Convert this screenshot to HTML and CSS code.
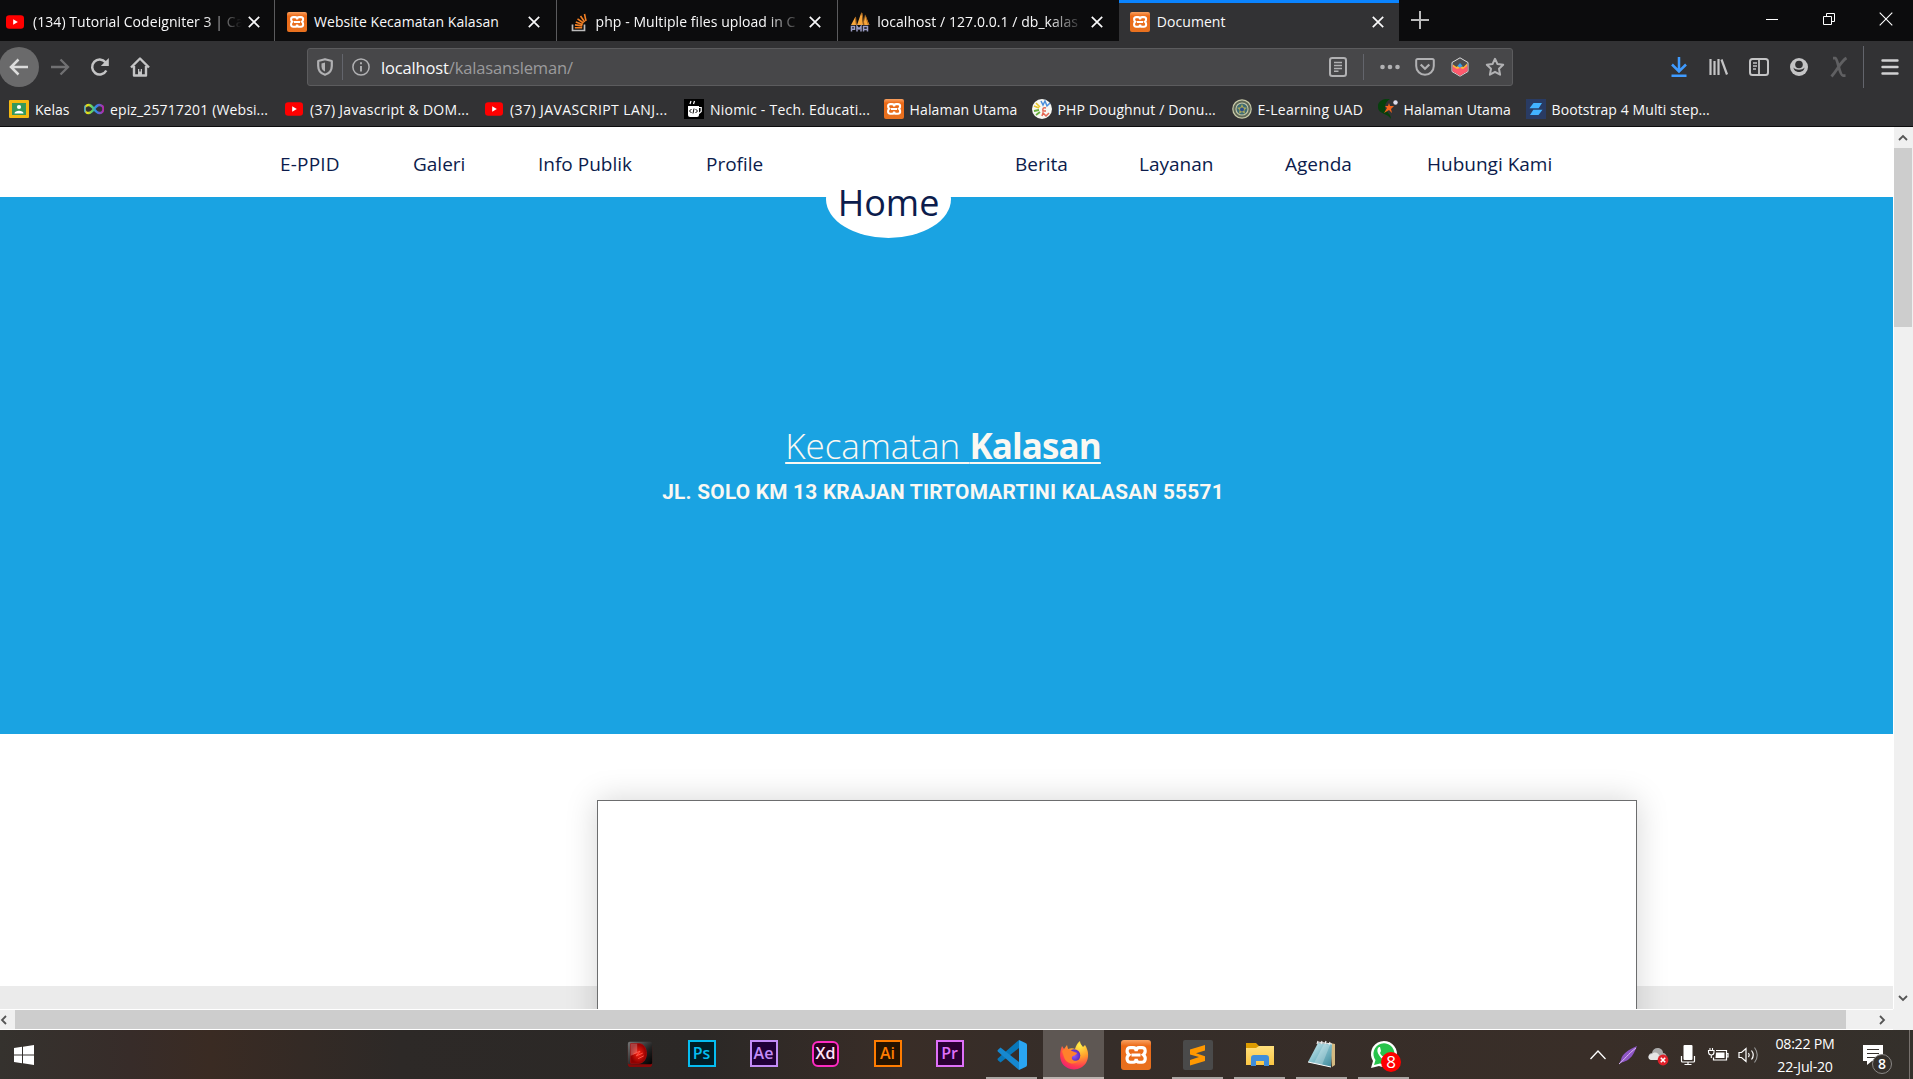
FILE: index.html
```html
<!DOCTYPE html>
<html lang="id">
<head>
<meta charset="utf-8">
<title>Document</title>
<link rel="stylesheet" href="styles.css">
</head>
<body>
<svg class="sprite" aria-hidden="true">
  <defs>
    <linearGradient id="orange" x2="0" y2="1"><stop stop-color="#f9a262"/><stop offset=".2" stop-color="#ec6a18"/><stop offset="1" stop-color="#e8711f"/></linearGradient>
    <linearGradient id="rainbow" gradientUnits="userSpaceOnUse" x1="0" y1="0" x2="20" y2="0"><stop stop-color="#2196f3"/><stop offset=".15" stop-color="#ffe000"/><stop offset=".4" stop-color="#5bd06b"/><stop offset=".6" stop-color="#2a8cf0"/><stop offset="1" stop-color="#c020a0"/></linearGradient>
    <radialGradient id="fire" cx=".7" cy=".15" r="1"><stop stop-color="#fff04a"/><stop offset=".4" stop-color="#ffa02c"/><stop offset=".75" stop-color="#ff3b4e"/><stop offset="1" stop-color="#e31587"/></radialGradient>
    <radialGradient id="globe"><stop stop-color="#9059ff"/><stop offset="1" stop-color="#5b2bb8"/></radialGradient>
    <linearGradient id="dark" x2="1" y2="1"><stop stop-color="#777"/><stop offset=".6" stop-color="#222"/><stop offset="1" stop-color="#000"/></linearGradient>
    <radialGradient id="red"><stop stop-color="#ff2010"/><stop offset="1" stop-color="#8d0000"/></radialGradient>
    <linearGradient id="glass" x2="1" y2="1"><stop stop-color="#d9f1f4"/><stop offset=".5" stop-color="#7fbcc9"/><stop offset="1" stop-color="#3d8799"/></linearGradient>
    <linearGradient id="folder" x2="0" y2="1"><stop stop-color="#ffe07d"/><stop offset="1" stop-color="#fbc644"/></linearGradient>
  </defs>
  <symbol id="youtube" viewBox="0 0 20 20"><rect x="1" y="3.3" width="18" height="13.4" rx="3.2" fill="#f00"/><path d="M8.2 7.2v5.6l4.6-2.8z" fill="#fff"/></symbol>
  <symbol id="xampp" viewBox="0 0 20 20"><rect width="20" height="20" rx="2" fill="url(#orange)"/><path d="M6.2 5.1h1.9c2 0 2 1.4 2 2.4 0-1 0-2.4 2-2.4H14c2.600 0 2.700 3.300.9 4.700 2 1.600 1.600 5-.9 5h-1.900c-1.800 0-2-1.300-2-2.300 0 1-.2 2.300-2 2.300H6.200c-2.500 0-2.900-3.400-.9-5-1.800-1.400-1.700-4.700.9-4.700zM7 10h6" fill="none" stroke="#fff" stroke-width="2.100"/></symbol>
  <symbol id="stack" viewBox="0 0 20 20"><path d="M3.500 12.500v6h12v-6" fill="none" stroke="#bcbbbb" stroke-width="1.700"/><path d="M5.800 15.700h7.400M6 12.900l7.300 1M6.800 10l7 2.500M8.500 6.800l6 4.200M11.500 4l4.200 6M15.500 2l1.500 7" fill="none" stroke="#f48024" stroke-width="1.600"/></symbol>
  <symbol id="pma" viewBox="0 0 20 20"><path d="M1 13L5.500 4.500 6 13zM7 13L11.500 0l1.500 13zM13.500 13L15 2.500l4.500 10.500z" fill="#f8a63a"/><path d="M5.500 5l1 8M12 1l2 12M15.500 4l3 9" stroke="#a9641c" fill="none"/><path d="M1.500 19.500v-5h3v2.700h-3M7 19.500v-5l2 2.500 2-2.500v5M13.500 19.500v-5h4v5M13.500 17.500h4" stroke="#9a9cc4" stroke-width="1.500" fill="none"/></symbol>
  <symbol id="close" viewBox="0 0 12 12"><path d="M.8.800l10.400 10.400M11.200.800L.8 11.200" fill="none" stroke="currentColor" stroke-width="1.700"/></symbol>
  <symbol id="kelas" viewBox="0 0 20 20"><rect y="1" width="20" height="18" rx="1" fill="#f4b811"/><rect x="3" y="4" width="14" height="12" fill="#35985b"/><circle cx="10" cy="8" r="2.100" fill="#fff"/><path d="M5.500 14.500c0-3.800 9-3.800 9 0z" fill="#fff"/></symbol>
  <symbol id="infinity" viewBox="0 0 20 20"><path d="M10 10C7.600 6.800 6.300 6 4.600 6a3.900 3.900 0 000 8c1.700 0 3-.800 5.400-4s3.700-4 5.400-4a3.900 3.900 0 010 8c-1.700 0-3-.800-5.400-4z" fill="none" stroke="url(#rainbow)" stroke-width="2.300"/></symbol>
  <symbol id="niomic" viewBox="0 0 20 20"><path fill="#000" d="M0 0h20v20H0z"/><path d="M4 7h11v9q0 2-2 2H6q-2 0-2-2z" fill="#fff"/><path d="M6 5l1-3M9.500 5l1-3M15 8.500h2.200v4l-2.200 2" fill="none" stroke="#fff" stroke-width="1.200"/><path d="M7.500 10L5.500 12l2 2M11.500 10l2 2-2 2M10 9.500l-1 5" stroke="#000" fill="none"/></symbol>
  <symbol id="chartphp" viewBox="0 0 20 20"><circle cx="10" cy="10" r="10" fill="#f7f7f2"/><path d="M2 7l5 2M4 4l4 4" stroke="#e8c52b" stroke-width="1.600"/><path d="M9 2l2 4 2-4 2 5 3-3" stroke="#4b8edb" fill="none" stroke-width="1.500"/><path d="M2 12l5-1M4 16l4-3" stroke="#66ad3b" stroke-width="1.800"/><path d="M10 17l1-3 3 3 3-3M14 9q-4-1-3 3l3 0" stroke="#e46652" fill="none" stroke-width="1.500"/></symbol>
  <symbol id="uad" viewBox="0 0 20 20"><circle cx="10" cy="10" r="9.800" fill="#c8caa9"/><circle cx="10" cy="10" r="7.600" fill="none" stroke="#5d6756" stroke-width="2"/><circle cx="10" cy="10" r="5.500" fill="#3e6b74"/><path d="M10 5l1.500 3.300 3.500.4-2.600 2.400.7 3.600L10 13l-3.100 1.700.7-3.600L5 8.700l3.500-.4z" fill="#a8a75b"/><circle cx="10" cy="10.500" r="2" fill="#2b4d8e"/></symbol>
  <symbol id="leaf" viewBox="0 0 20 20"><path d="M12 0C3-1-1 4 0 9c1 6 9 5 13 11 0-6-5-6-6-11-.4-4 2-7 5-9z" fill="#06400c"/><path d="M11 4l1 3 4 0-3 3 1 4-3-3-5 3 3-5-2-2 3 0z" fill="#f5651c"/><circle cx="17.500" cy="3.500" r="2.200" fill="#dde"/></symbol>
  <symbol id="boot" viewBox="0 0 20 20"><path fill="#293b63" d="M0 0h20v20H0z"/><path d="M7.500 4H16l-3.300 5.300H3.500zM7.300 10.700h9.200L12.500 16H4z" fill="#42b2ff"/></symbol>
</svg>

<div class="screen">
  <header class="browser">
    <div class="tabs">
      <div class="tab first"><svg class="fav"><use href="#youtube"/></svg><span class="label faded">(134) Tutorial Codeigniter 3 | Ca</span><svg class="x"><use href="#close"/></svg></div>
      <div class="tab"><svg class="fav"><use href="#xampp"/></svg><span class="label">Website Kecamatan Kalasan</span><svg class="x"><use href="#close"/></svg></div>
      <div class="tab"><svg class="fav"><use href="#stack"/></svg><span class="label faded">php - Multiple files upload in C</span><svg class="x"><use href="#close"/></svg></div>
      <div class="tab"><svg class="fav"><use href="#pma"/></svg><span class="label faded">localhost / 127.0.0.1 / db_kalas</span><svg class="x"><use href="#close"/></svg></div>
      <div class="tab active"><svg class="fav"><use href="#xampp"/></svg><span class="label">Document</span><svg class="x"><use href="#close"/></svg></div>
      <svg class="plus" viewBox="0 0 18 18"><path d="M9 0v18M0 9h18" stroke="#bbb" stroke-width="2"/></svg>
      <div class="window-controls">
        <svg viewBox="0 0 14 14"><path d="M1 7.500h12" stroke="#fff"/></svg>
        <svg viewBox="0 0 14 14"><path d="M1.500 4.500h8v8h-8zM4.500 4.500v-3h8v8h-3" fill="none" stroke="#fff"/></svg>
        <svg viewBox="0 0 14 14"><path d="M.7.700l12.600 12.600M13.300.700L.7 13.300" stroke="#fff" stroke-width="1.100"/></svg>
      </div>
    </div>

    <div class="toolbar">
      <div class="back"><svg class="ic" viewBox="0 0 20 20"><path d="M19 10H2M9.500 2.500L2 10l7.500 7.500" fill="none" stroke="#dcdcdc" stroke-width="2.500"/></svg></div>
      <div class="nav-buttons">
        <svg class="ic" viewBox="0 0 20 20"><path d="M1 10h17M10.500 2.500L18 10l-7.500 7.500" fill="none" stroke="#707072" stroke-width="2.300"/></svg>
        <svg class="ic" viewBox="0 0 20 20"><path d="M16.300 13.500A7.500 7.500 0 1115.500 5.300" fill="none" stroke="#c4c4c5" stroke-width="2.500"/><path d="M18.800 1v8h-8z" fill="#c4c4c5"/></svg>
        <svg class="ic" viewBox="0 0 20 20"><path d="M1 10.500L10 1.500l9 9M4 9v9.500h12V9" fill="none" stroke="#c4c4c5" stroke-width="2.400" stroke-linejoin="round"/><path d="M8 18v-6h4v6z" fill="#c4c4c5"/><path d="M10 12v2.500" stroke="#323234" stroke-width="1.500"/></svg>
      </div>
      <div class="urlbar">
        <svg class="shield" viewBox="0 0 16 18"><path d="M8 1.200L1.200 3v5c0 4.500 3 7.700 6.800 8.800 3.800-1.100 6.800-4.300 6.800-8.800V3z" fill="none" stroke="#b1b1b3" stroke-width="2.200" stroke-linejoin="round"/><path d="M8 4.500L4.500 5.400v3c0 2.500 1.500 4.300 3.500 5z" fill="#b1b1b3"/></svg>
        <i class="rule"></i>
        <svg class="info" viewBox="0 0 18 18"><circle cx="9" cy="9" r="8.100" fill="none" stroke="#b1b1b3" stroke-width="1.500"/><path d="M9 8v5.500M9 4.300v2" stroke="#b1b1b3" stroke-width="1.900"/></svg>
        <span class="url">localhost<span class="path">/kalasansleman/</span></span>
        <div class="url-tools">
          <svg class="ic" viewBox="0 0 20 20"><rect x="2" y="1" width="16" height="18" rx="2.300" fill="none" stroke="#b1b1b3" stroke-width="2"/><path d="M6 5.500h8M6 8.500h8M6 11.500h8M6 14.300h4.500" stroke="#b1b1b3" stroke-width="1.400"/></svg>
          <i class="rule"></i>
          <svg class="ic dots" viewBox="0 0 20 20"><g fill="#b1b1b3"><circle cx="2.500" cy="10" r="2.300"/><circle cx="10" cy="10" r="2.300"/><circle cx="17.500" cy="10" r="2.300"/></g></svg>
          <svg class="ic" viewBox="0 0 20 20"><path d="M2.700 2h14.600q1.500 0 1.500 1.500V9a8.800 8.800 0 01-17.600 0V3.500Q1.200 2 2.700 2z" fill="none" stroke="#b1b1b3" stroke-width="2"/><path d="M5.700 7.500L10 11.700l4.300-4.200" fill="none" stroke="#b1b1b3" stroke-width="2.300"/></svg>
          <svg class="ic" viewBox="0 0 20 20"><path d="M10 .8l8 4.700v9L10 19.200l-8-4.700v-9z" fill="#4d4d4f" stroke="#ddd"/><path d="M2.500 8l4 3L10 9l3 2 4.500-3v6.300L10 18.700l-7.500-4.400z" fill="#ff596d"/><path d="M3 7.500l3.500 2.500 1.500-1 2 2 2-1.500 1.500.5L17 6.500V9l-4 3-3-1-3 1-4-2.500z" fill="#ffb737"/><path d="M7.500 9l2.500-3 2.500 3-2.500 1.800z" fill="#36a2eb"/></svg>
          <svg class="ic" viewBox="0 0 20 20"><path d="M10 1.800l2.500 5.300 5.700.7-4.200 4 1.100 5.900L10 14.800l-5.100 2.900L6 11.800l-4.200-4 5.700-.7z" fill="none" stroke="#b1b1b3" stroke-width="2" stroke-linejoin="round"/></svg>
        </div>
      </div>
      <div class="actions">
        <svg class="ic" viewBox="0 0 20 20"><path d="M10 0v14M3 7.500l7 7 7-7M2.500 18.700h15" fill="none" stroke="#3f9bff" stroke-width="2.500"/></svg>
        <svg class="ic" viewBox="0 0 20 20"><path d="M1.500 2v16M5.500 4v14M9.500 2v16M12.500 2.500L18 17.500" fill="none" stroke="#c4c4c5" stroke-width="2.200"/></svg>
        <svg class="ic" viewBox="0 0 20 20"><rect x="1" y="2" width="18" height="16" rx="2.500" fill="none" stroke="#c4c4c5" stroke-width="2"/><path d="M10 2v16" stroke="#c4c4c5" stroke-width="1.800"/><path d="M4 6h4M4 9h4M4 12h3" stroke="#c4c4c5" stroke-width="1.300"/></svg>
        <svg class="ic" viewBox="0 0 20 20"><circle cx="10" cy="10" r="9" fill="#c4c4c5"/><circle cx="10" cy="7.500" r="3.800" fill="#323234"/><path d="M4.500 10.500c.5 6 10.500 6 11 0-2 3-9 3-11 0z" fill="#323234"/></svg>
        <svg class="ic" viewBox="0 0 20 20"><path d="M4 1.200h2.500c2 0 4 17.500 7.500 17.500h2.500M17.500 1C12 4 9 12 2.500 19.500" fill="none" stroke="#606062" stroke-width="2.800"/></svg>
        <i class="rule tall"></i>
        <svg class="ic" viewBox="0 0 20 20"><path d="M2.500 3.500h15M2.500 10h15M2.500 16.500h15" stroke="#d0d0d1" stroke-width="2.400" stroke-linecap="round"/></svg>
      </div>
    </div>

    <nav class="bookmarks">
      <a class="b1"><svg><use href="#kelas"/></svg>Kelas</a>
      <a class="b2"><svg><use href="#infinity"/></svg>epiz_25717201 (Websi...</a>
      <a class="b3"><svg><use href="#youtube"/></svg>(37) Javascript &amp; DOM...</a>
      <a class="b4"><svg><use href="#youtube"/></svg>(37) JAVASCRIPT LANJ...</a>
      <a class="b5"><svg><use href="#niomic"/></svg>Niomic - Tech. Educati...</a>
      <a class="b6"><svg><use href="#xampp"/></svg>Halaman Utama</a>
      <a class="b7"><svg><use href="#chartphp"/></svg>PHP Doughnut / Donu...</a>
      <a class="b8"><svg><use href="#uad"/></svg>E-Learning UAD</a>
      <a class="b9"><svg><use href="#leaf"/></svg>Halaman Utama</a>
      <a class="b10"><svg><use href="#boot"/></svg>Bootstrap 4 Multi step...</a>
    </nav>
  </header>

  <div class="viewport">
    <main class="page">
      <nav class="menu">
        <a class="m1">E-PPID</a><a class="m2">Galeri</a><a class="m3">Info Publik</a><a class="m4">Profile</a>
        <a class="home">Home</a>
        <a class="m5">Berita</a><a class="m6">Layanan</a><a class="m7">Agenda</a><a class="m8">Hubungi Kami</a>
      </nav>
      <section class="hero">
        <h1>Kecamatan <b>Kalasan</b></h1>
        <p>JL. SOLO KM 13 KRAJAN TIRTOMARTINI KALASAN 55571</p>
      </section>
      <section class="content">
        <div class="card"></div>
        <div class="strip"></div>
      </section>
    </main>
    <div class="vscroll">
      <svg viewBox="0 0 10 6"><path d="M1 5l4-4 4 4" fill="none" stroke="#555" stroke-width="1.800"/></svg>
      <div class="vthumb"></div>
      <svg class="down" viewBox="0 0 10 6"><path d="M1 1l4 4 4-4" fill="none" stroke="#555" stroke-width="1.800"/></svg>
    </div>
    <div class="hscroll">
      <svg viewBox="0 0 6 10"><path d="M5 1L1 5l4 4" fill="none" stroke="#555" stroke-width="1.800"/></svg>
      <div class="hthumb"></div>
      <svg class="right" viewBox="0 0 6 10"><path d="M1 1l4 4-4 4" fill="none" stroke="#555" stroke-width="1.800"/></svg>
    </div>
  </div>

  <footer class="taskbar">
    <svg class="start" viewBox="0 0 20 20"><path d="M0 3l8-1.200v7.700H0zM9 1.700L20 0v9.500H9zM0 10.500h8v7.700L0 17zM9 10.500h11V20L9 18.300z" fill="#fff"/></svg>
    <div class="apps">
      <div class="app"><svg viewBox="0 0 30 30"><rect x="2" y="4" width="26" height="25" rx="3" fill="#870909"/><rect x="2" y="2" width="26" height="24" rx="2" fill="url(#dark)"/><path d="M5 4h9c10 0 11 20 0 21H5z" fill="url(#red)" stroke="#a50a0a"/><path d="M5 4h7v10l-7 3z" fill="#fff" opacity=".25"/><path d="M8 15l7-3-4 5 7-3M13 20l6-3" stroke="#ff574a" fill="none"/></svg></div>
      <div class="app"><span class="adobe ps">Ps</span></div>
      <div class="app"><span class="adobe ae">Ae</span></div>
      <div class="app"><span class="adobe xd">Xd</span></div>
      <div class="app"><span class="adobe ai">Ai</span></div>
      <div class="app"><span class="adobe pr">Pr</span></div>
      <div class="app run"><svg viewBox="0 0 30 30"><path d="M22 8L3.500 22.500 1 20.300Q0 19.300 1 18.300L22 0z" fill="#0877b9"/><path d="M22 22L3.500 7.500 1 9.700q-1 1 0 2L22 30z" fill="#1688d0"/><path d="M22 0l6.500 3Q30 3.700 30 5v20q0 1.300-1.500 2L22 30z" fill="#2aa5f2"/></svg></div>
      <div class="app current"><svg viewBox="0 0 30 30"><path d="M3 6l2 3 3-4 1 4c3-1 5-1 7 0 1-3 2-6 5-8 0 3 2 4 3 6l2-2c4 6 4 13 1 18-6 9-19 8-24 0C0 17 1 11 3 6z" fill="url(#fire)"/><circle cx="15" cy="15.500" r="6.300" fill="url(#globe)"/><path d="M3 11c3-3 7-3 10 0l5 2c-1 3-4 2-5 4-1 3 3 5 7 3-4 6-13 4-15-3z" fill="#ff812c"/></svg></div>
      <div class="app"><svg viewBox="0 0 20 20"><use href="#xampp"/></svg></div>
      <div class="app run"><svg viewBox="0 0 30 30"><rect width="30" height="30" rx="2" fill="#4a4a4a"/><path d="M7 9.500L22 5v5.500l-9 2.700 9 3V21L7 25.500V20l9-2.900-9-2.700z" fill="#ff9800"/></svg></div>
      <div class="app run"><svg viewBox="0 0 30 30"><path d="M1 3h10l3 3h14v5H1z" fill="#dc9b00"/><path d="M1 8h10l3-2h15v19H1z" fill="url(#folder)"/><path d="M6 26V18q0-3 3-3h12q3 0 3 3v8h-5v-5h-8v5z" fill="#3f8edb"/></svg></div>
      <div class="app run"><svg viewBox="0 0 30 30"><path d="M23 3l5 1v21l-3 2z" fill="#d4ba82"/><path d="M11 3l14 1-1 23-23-5z" fill="url(#glass)"/><path d="M11 2l14 2M10 4l1-3M14 4l1-3M18 4l1-3M22 5l1-3" stroke="#eee" stroke-width="1.200"/><path d="M1 22l23 5" stroke="#fff"/><path d="M17 4l6 1-8 20-8-2z" fill="#fff" opacity=".25"/></svg></div>
      <div class="app run"><svg viewBox="0 0 30 30"><path d="M2 28l2-7A13 13 0 1110 26z" fill="#fff"/><path d="M5 25l1.500-5A10.500 10.500 0 1111 23.500z" fill="#27c34b"/><path d="M10 7c-4 3 0 10 5 13 5 2 6 0 6-3l-4-2-2 2c-2-1-3-2-4-4l1-2-1-4z" fill="#fff"/><circle cx="22" cy="22" r="10" fill="#f00"/></svg><span class="count">8</span></div>
    </div>
    <div class="tray">
      <svg viewBox="0 0 20 20"><path d="M2.500 14l7.500-8 7.500 8" fill="none" stroke="#fff" stroke-width="1.300"/></svg>
      <svg viewBox="0 0 20 20"><path d="M1 19c2-2 7-2 10-5 4-3 6-8 8-13C10 5 4 9 3 15z" fill="#8e56c5"/><path d="M1 19C6 15 10 9 18 3" stroke="#ddbdf4" fill="none"/></svg>
      <svg viewBox="0 0 20 20"><path d="M4 15C-1 14 0 8 4 8c1-7 11-6 11 0 4 0 5 6 1 7z" fill="#aaa"/><path d="M3 15c-4-1-3-6 1-6 3-3 7-1 8 3v3z" fill="#e5e5e5"/><circle cx="15" cy="15" r="5.400" fill="#e0202a"/><path d="M12.800 12.800l4.400 4.400M17.200 12.800l-4.400 4.400" stroke="#fff" stroke-width="1.600"/></svg>
      <svg viewBox="0 0 20 20"><rect x="5.500" width="9" height="15" rx="1" fill="#fff"/><path d="M3.500 11v5q0 1 1 1h11q1 0 1-1v-5M10 17v3M6.500 19.500h7" fill="none" stroke="#fff" stroke-width="1.200"/></svg>
      <svg viewBox="0 0 20 20"><path d="M8 5.500h10.500v9.500H5.500v-2.500M18.500 8.500h1.500v3.500h-1.500" fill="none" stroke="#fff" stroke-width="1.200"/><path d="M8 7.500h8.500V13H7.500z" fill="#fff"/><path d="M.5 5.500H6V7q0 3-2.700 3T.5 7zM2 3v2.500M4.500 3v2.500M3.300 10v3" fill="none" stroke="#fff" stroke-width="1.100"/></svg>
      <svg viewBox="0 0 20 20"><path d="M1 7.500h2.500L8 3.500v13l-4.500-4H1z" fill="none" stroke="#fff" stroke-width="1.200"/><path d="M10.500 8q1.500 2 0 4.200M13.500 5.500q3.500 4.500 0 9" fill="none" stroke="#fff" stroke-width="1.200"/><path d="M16.500 2.500q5.500 7.500 0 15" fill="none" stroke="#999" stroke-width="1.100"/></svg>
      <div class="clock"><span>08:22 PM</span><span>22-Jul-20</span></div>
      <div class="notice"><svg viewBox="0 0 22 20"><path d="M0 0h20v16H9l-5 4v-4H0z" fill="#fff"/><path d="M4 4.500h12M4 8.500h12M4 12.500h8" stroke="#35302c" stroke-width="1.200"/></svg><span class="badge">8</span></div>
    </div>
  </footer>
</div>
</body>
</html>
```

FILE: styles.css
```css
* { box-sizing: border-box; }
body { margin: 0; font-family: "Open Sans", "Noto Sans", sans-serif; overflow: hidden; }
svg { display: block; flex: none; overflow: visible; }
a, span { white-space: nowrap; }
.sprite { position: absolute; width: 0; height: 0; }
.screen { width: 1913px; height: 1079px; display: flex; flex-direction: column; overflow: hidden; }

.browser { height: 127px; flex: none; background: #323234; border-bottom: 1px solid #0c0c0d; color: #f9f9fa; }
.tabs { height: 41px; display: flex; background: #0c0c0d; }
.tab { width: 281.600px; height: 41px; flex: none; display: flex; align-items: center; padding: 2px 16px 0 12px; border-left: 1px solid #5b5b5d; font-size: 14px; }
.tab.first { width: 274px; padding: 2px 14px 0 5px; border-left: 0; }
.tab.active { background: #323234; border-left: 0; border-top: 3px solid #0a84ff; padding: 0 15px 1px 11px; width: 280px; }
.fav { width: 20px; height: 20px; }
.label { flex: 1; margin: 0 6px 0 7px; letter-spacing: .06px; min-width: 0; }
.first .label { margin-left: 8px; }
.faded { -webkit-mask-image: linear-gradient(to right, #000 82%, transparent 100%); mask-image: linear-gradient(to right, #000 82%, transparent 100%); }
.x { width: 12px; height: 12px; }
.plus { width: 18px; height: 18px; margin: 11px 0 0 12px; }
.window-controls { margin: 12px 20px 0 auto; display: flex; gap: 43px; }
.window-controls svg { width: 14px; height: 14px; }

.toolbar { height: 51px; display: flex; align-items: center; }
.ic { width: 20px; height: 20px; }
.back { width: 40px; height: 40px; margin-left: -1px; border-radius: 50%; background: #6a6a6b; display: grid; place-items: center; flex: none; }
.nav-buttons { display: flex; gap: 20px; margin-left: 11px; width: 257px; flex: none; }
.urlbar { width: 1206px; height: 38px; flex: none; background: #474749; border: 1px solid #5c5c5e; border-radius: 3px; display: flex; align-items: center; }
.shield { width: 16px; height: 18px; margin-left: 9px; }
.rule { width: 1px; height: 26px; background: #63656c; flex: none; }
.urlbar > .rule { margin: 0 9px; }
.info { width: 18px; height: 18px; }
.url { margin: 2px 0 0 11px; font-size: 16.500px; letter-spacing: -.15px; }
.path { color: #9b9b9d; }
.url-tools { margin: 0 7px 0 auto; display: flex; align-items: center; gap: 15px; }
.url-tools .dots { margin-left: 1px; }
.actions { margin: 0 13px 0 auto; display: flex; align-items: center; gap: 20px; }
.rule.tall { height: 42px; margin: 0 -4px 0 -6px; }

.bookmarks { height: 34px; display: flex; align-items: center; padding-left: 9px; font-size: 14px; }
.bookmarks a { display: flex; align-items: center; gap: 6px; flex: none; height: 30px; }
.bookmarks svg { width: 20px; height: 20px; }
.b1 { width: 75px; } .b2 { width: 200px; letter-spacing: .13px; } .b3 { width: 200px; letter-spacing: .28px; } .b4 { width: 200px; letter-spacing: .42px; }
.b5 { width: 199.500px; letter-spacing: .22px; } .b6 { width: 148px; letter-spacing: .15px; } .b7 { width: 200px; letter-spacing: .13px; } .b8 { width: 146px; letter-spacing: .25px; }
.b9 { width: 148px; letter-spacing: .1px; } .b10 { width: 190px; letter-spacing: .1px; }

.viewport { height: 903px; flex: none; display: grid; grid-template: 882px 21px / 1893px 20px; background: #f0f0f0; }
.page { overflow: hidden; background: #fff; }
.menu { height: 70px; display: flex; padding: 23px 0 0 280px; font-size: 19px; line-height: 28px; color: #0c1c4c; }
.menu a { flex: none; }
.m1 { width: 133px; letter-spacing: .2px; } .m2 { width: 125px; } .m3 { width: 168px; } .m4 { width: 120px; }
.m5 { width: 124px; } .m6 { width: 146px; } .m7 { width: 142px; }
.home { position: relative; width: 125px; height: 78px; margin: 10px 64px 0 0; padding-top: 26px; border-radius: 50%; background: #fff; font-size: 36px; line-height: 33px; text-align: center; }
.hero { height: 536.500px; padding-top: 224px; background: #1aa3e2; color: #faf8f2; text-align: center; }
.hero h1 { margin: 0 7px 0 0; font-size: 35px; line-height: 50px; font-weight: 300; text-decoration: underline; text-decoration-thickness: 2px; text-underline-offset: 3px; }
.hero b { font-weight: 700; letter-spacing: -.9px; }
.hero p { margin: 7px 7px 0 0; font: 700 20.800px/28px Roboto, sans-serif; letter-spacing: .25px; }
.content { height: 276px; display: grid; grid-template: 252.500px 23px / 597px 1040px 1fr; }
.card { grid-area: 1 / 2 / 3 / 3; margin-top: 66.500px; height: 400px; background: #fff; border: 1px solid #6c6d6e; box-shadow: 0 0 30px rgba(0,0,0,.17); z-index: 1; }
.strip { grid-area: 2 / 1 / 3 / 4; background: #ebebeb; }
.vscroll { border-left: 1px solid #fff; display: flex; flex-direction: column; align-items: center; padding: 8px 1px 8px 0; }
.vscroll svg { width: 10px; height: 6px; }
.vthumb { width: 18px; height: 179px; margin-top: 7px; background: #cdcdcd; }
.down { margin-top: auto; }
.hscroll { border-top: 1px solid #fff; border-bottom: 1px solid #fff; display: flex; align-items: center; padding: 0 8px 0 1px; }
.hscroll svg { width: 6px; height: 10px; }
.hthumb { width: 1831px; height: 19px; margin-left: 8px; background: #cdcdcd; }
.right { margin-left: auto; }

.taskbar { height: 49px; flex: none; display: flex; background: linear-gradient(90deg, #35322e 0, #372c29 130px, #3a2b23 210px, #2d2927 400px, #2b2826 700px, #392d27 900px, #352d29 1100px, #392e28 1600px, #34302b 1913px); color: #fff; }
.start { width: 20px; height: 20px; margin: 15px 0 0 14px; }
.apps { margin-left: 575px; display: flex; gap: 1px; flex: none; }
.app { width: 61px; height: 49px; padding-top: 10px; display: flex; justify-content: center; position: relative; }
.app svg { width: 30px; height: 30px; }
.app:first-child svg { width: 28px; height: 28px; }
.run { border-bottom: 2px solid #aaa6a3; width: 51px; margin: 0 5px; }
.current { background: #5e5753; border-bottom: 2px solid #bcb4b0; }
.adobe { width: 28px; height: 27px; border: 2px solid; font: 600 16px/22px "Open Sans", sans-serif; text-align: center; }
.ps { color: #05bdf1; background: #001d26; }
.ae { color: #c38cf7; background: #200038; }
.xd { width: 27px; height: 26px; border-color: #ff2bc2; color: #ffe1fa; background: #2c001e; border-radius: 6px; margin-top: 1px; line-height: 20px; }
.ai { color: #ff7c00; background: #261300; }
.pr { color: #df70f9; background: #2a0033; }
.count { position: absolute; left: 23px; top: 22px; width: 20px; line-height: 20px; font-size: 17px; text-align: center; }
.tray { margin-left: auto; display: flex; padding-top: 15px; border-right: 1px solid #77716d; margin-right: 3px; height: 49px; }
.tray > svg { width: 20px; height: 20px; margin-right: 10px; }
.clock { width: 64px; margin: -13px 0 0 5px; display: flex; flex-direction: column; font-size: 14.200px; line-height: 23px; text-align: center; letter-spacing: -.25px; }
.notice { width: 46px; margin-left: 26px; position: relative; }
.notice svg { width: 22px; height: 20px; }
.badge { position: absolute; left: 9px; top: 9px; width: 20px; height: 20px; border-radius: 50%; border: 1px solid #8b8886; background: #35302c; font: 600 14px/18px "Open Sans", sans-serif; text-align: center; }
```
